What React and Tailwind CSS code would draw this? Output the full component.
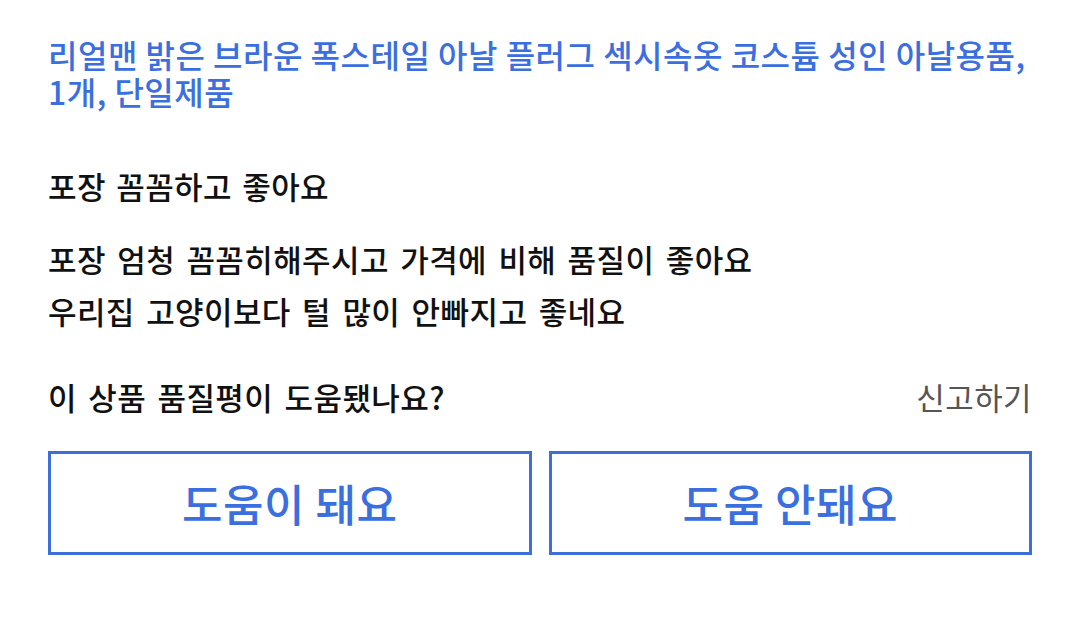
export default function App() {
  return (
    <div className="w-[1080px] h-[644px] bg-white px-12 pt-[36px] font-['Noto_Sans_CJK_KR','Noto_Sans',sans-serif] text-[#111]">
      {/* product title */}
      <h2 className="text-[32px] leading-[37px] font-medium text-[#3b6fe0] tracking-[0.5px] break-keep">
        리얼맨 밝은 브라운 폭스테일 아날 플러그 섹시속옷 코스튬 성인 아날용품, 1개, 단일제품
      </h2>

      {/* review body */}
      <p className="mt-[57px] text-[31px] leading-[38px] font-medium tracking-[0.4px] [word-spacing:3px]">포장 꼼꼼하고 좋아요</p>
      <div className="mt-[28px] text-[31px] leading-[52px] font-medium tracking-[0.4px] [word-spacing:4px]">
        <p>포장 엄청 꼼꼼히해주시고 가격에 비해 품질이 좋아요</p>
        <p>우리집 고양이보다 털 많이 안빠지고 좋네요</p>
      </div>

      {/* helpful prompt */}
      <div className="mt-[41px] flex items-center justify-between">
        <span className="text-[31px] leading-[38px] font-medium tracking-[0.4px] [word-spacing:4px]">이 상품 품질평이 도움됐나요?</span>
        <span className="text-[31px] leading-[38px] text-[#555] tracking-[0.4px]">신고하기</span>
      </div>

      <div className="mt-[35px] grid grid-cols-2 gap-[17px]">
        <button className="h-[104px] border-[3px] border-[#3d6fdb] bg-white text-[44px] font-medium text-[#3b6fe0] tracking-[0.5px]">
          도움이 돼요
        </button>
        <button className="h-[104px] border-[3px] border-[#3d6fdb] bg-white text-[44px] font-medium text-[#3b6fe0] tracking-[0.5px]">
          도움 안돼요
        </button>
      </div>
    </div>
  );
}
